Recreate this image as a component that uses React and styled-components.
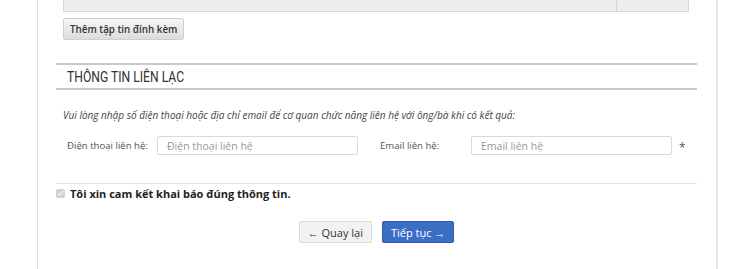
import React from 'react';
import styled, { createGlobalStyle } from 'styled-components';

const Global = createGlobalStyle`
  html, body { margin: 0; padding: 0; background: #fff; }
  body { font-family: "Open Sans", "Liberation Sans", sans-serif; color: #333; overflow: hidden; }
`;

const Panel = styled.div`
  margin-left: 37px;
  width: 681px;
  height: 269px;
  border-left: 1px solid #dedede;
  border-right: 2px solid #e2e2e2;
  padding: 0 19px 0 18px;
  box-sizing: border-box;
  overflow: hidden;
`;

const FileTable = styled.div`
  margin: -16px 8px 0 7px;
  display: grid;
  grid-template-columns: 1fr 72px;
  height: 28px;
  background: #eeeeee;
  border: 1px solid #d6d6d6;
  box-sizing: border-box;
`;

const HeadCell = styled.div`
  font-size: 11px;
  font-weight: 700;
  padding: 0 10px;
  line-height: 14px;
  border-left: ${p => (p.$divided ? '1px solid #d6d6d6' : 'none')};
`;

const GrayButton = styled.button`
  font-family: "Open Sans", "Liberation Sans", sans-serif;
  font-size: 9.8px;
  font-weight: 600;
  color: #333;
  height: 22px;
  padding: 0 6px;
  border: 1px solid #cfcfcf;
  border-radius: 2px;
  background: linear-gradient(#f7f7f7, #dcdcdc);
  cursor: pointer;
`;

const AttachRow = styled.div`
  display: flex;
  margin: 6px 0 0 7px;
`;

const SectionTitle = styled.div`
  margin-top: 23px;
  border-top: 2px solid #c9c9c9;
  border-bottom: 2px solid #c9c9c9;
  height: 23px;
  display: flex;
  align-items: center;
  padding-left: 11px;
`;

const TitleText = styled.span`
  font-family: Roboto, "Liberation Sans", sans-serif;
  font-size: 15px;
  color: #333;
  display: inline-block;
  transform: scaleX(0.81);
  transform-origin: left center;
  white-space: nowrap;
`;

const Note = styled.p`
  margin: 18px 0 0 7px;
  font-size: 10px;
  font-style: italic;
  color: #444;
  line-height: 14px;
`;

const FormRow = styled.div`
  margin-top: 13px;
  display: grid;
  grid-template-columns: 90px 201px 22px 91px 201px auto;
  align-items: center;
  padding-left: 11px;
`;

const Label = styled.label`
  font-size: 9.6px;
  color: #555;
  white-space: nowrap;
  grid-column: ${p => p.$col};
`;

const Field = styled.input`
  font-family: "Open Sans", "Liberation Sans", sans-serif;
  font-size: 10.5px;
  height: 19px;
  box-sizing: border-box;
  border: 1px solid #d9d9d9;
  border-radius: 2px;
  padding: 0 9px;
  color: #555;
  grid-column: ${p => p.$col};
  &::placeholder { color: #999; }
`;

const Star = styled.span`
  font-size: 12px;
  color: #555;
  margin-left: 7px;
  padding-top: 4px;
`;

const Divider = styled.div`
  margin-top: 27px;
  border-top: 1px solid #e4e4e4;
`;

const Agree = styled.label`
  display: flex;
  align-items: center;
  gap: 5px;
  margin-top: 1px;
  height: 17px;
  font-size: 11px;
  font-weight: 700;
  color: #222;
`;

const Check = styled.input`
  margin: 0;
  width: 9px;
  height: 9px;
`;

const Actions = styled.div`
  display: flex;
  justify-content: center;
  gap: 10px;
  margin-top: 19px;
`;

const NavButton = styled.button`
  font-family: "Open Sans", "Liberation Sans", sans-serif;
  font-size: 11px;
  height: 22px;
  padding: 0 8px;
  border-radius: 2px;
  border: 1px solid ${p => (p.$primary ? '#2f5fae' : '#dcdcdc')};
  background: ${p => (p.$primary ? '#3b6fc6' : '#f2f2f2')};
  color: ${p => (p.$primary ? '#fff' : '#333')};
  cursor: pointer;
`;

export default function App() {
  return (
    <>
      <Global />
      <Panel>
        <FileTable>
          <HeadCell>Tên tập tin</HeadCell>
          <HeadCell $divided />
        </FileTable>
        <AttachRow>
          <GrayButton>Thêm tập tin đính kèm</GrayButton>
        </AttachRow>

        <SectionTitle>
          <TitleText>THÔNG TIN LIÊN LẠC</TitleText>
        </SectionTitle>

        <Note>
          Vui lòng nhập số điện thoại hoặc địa chỉ email để cơ quan chức năng liên hệ với ông/bà khi có kết quả:
        </Note>

        <FormRow>
          <Label $col={1}>Điện thoại liên hệ:</Label>
          <Field $col={2} placeholder="Điện thoại liên hệ" />
          <Label $col={4}>Email liên hệ:</Label>
          <Field $col={5} placeholder="Email liên hệ" />
          <Star>*</Star>
        </FormRow>

        <Divider />

        <Agree>
          <Check type="checkbox" defaultChecked disabled />
          Tôi xin cam kết khai báo đúng thông tin.
        </Agree>

        <Actions>
          <NavButton>← Quay lại</NavButton>
          <NavButton $primary>Tiếp tục →</NavButton>
        </Actions>
      </Panel>
    </>
  );
}
